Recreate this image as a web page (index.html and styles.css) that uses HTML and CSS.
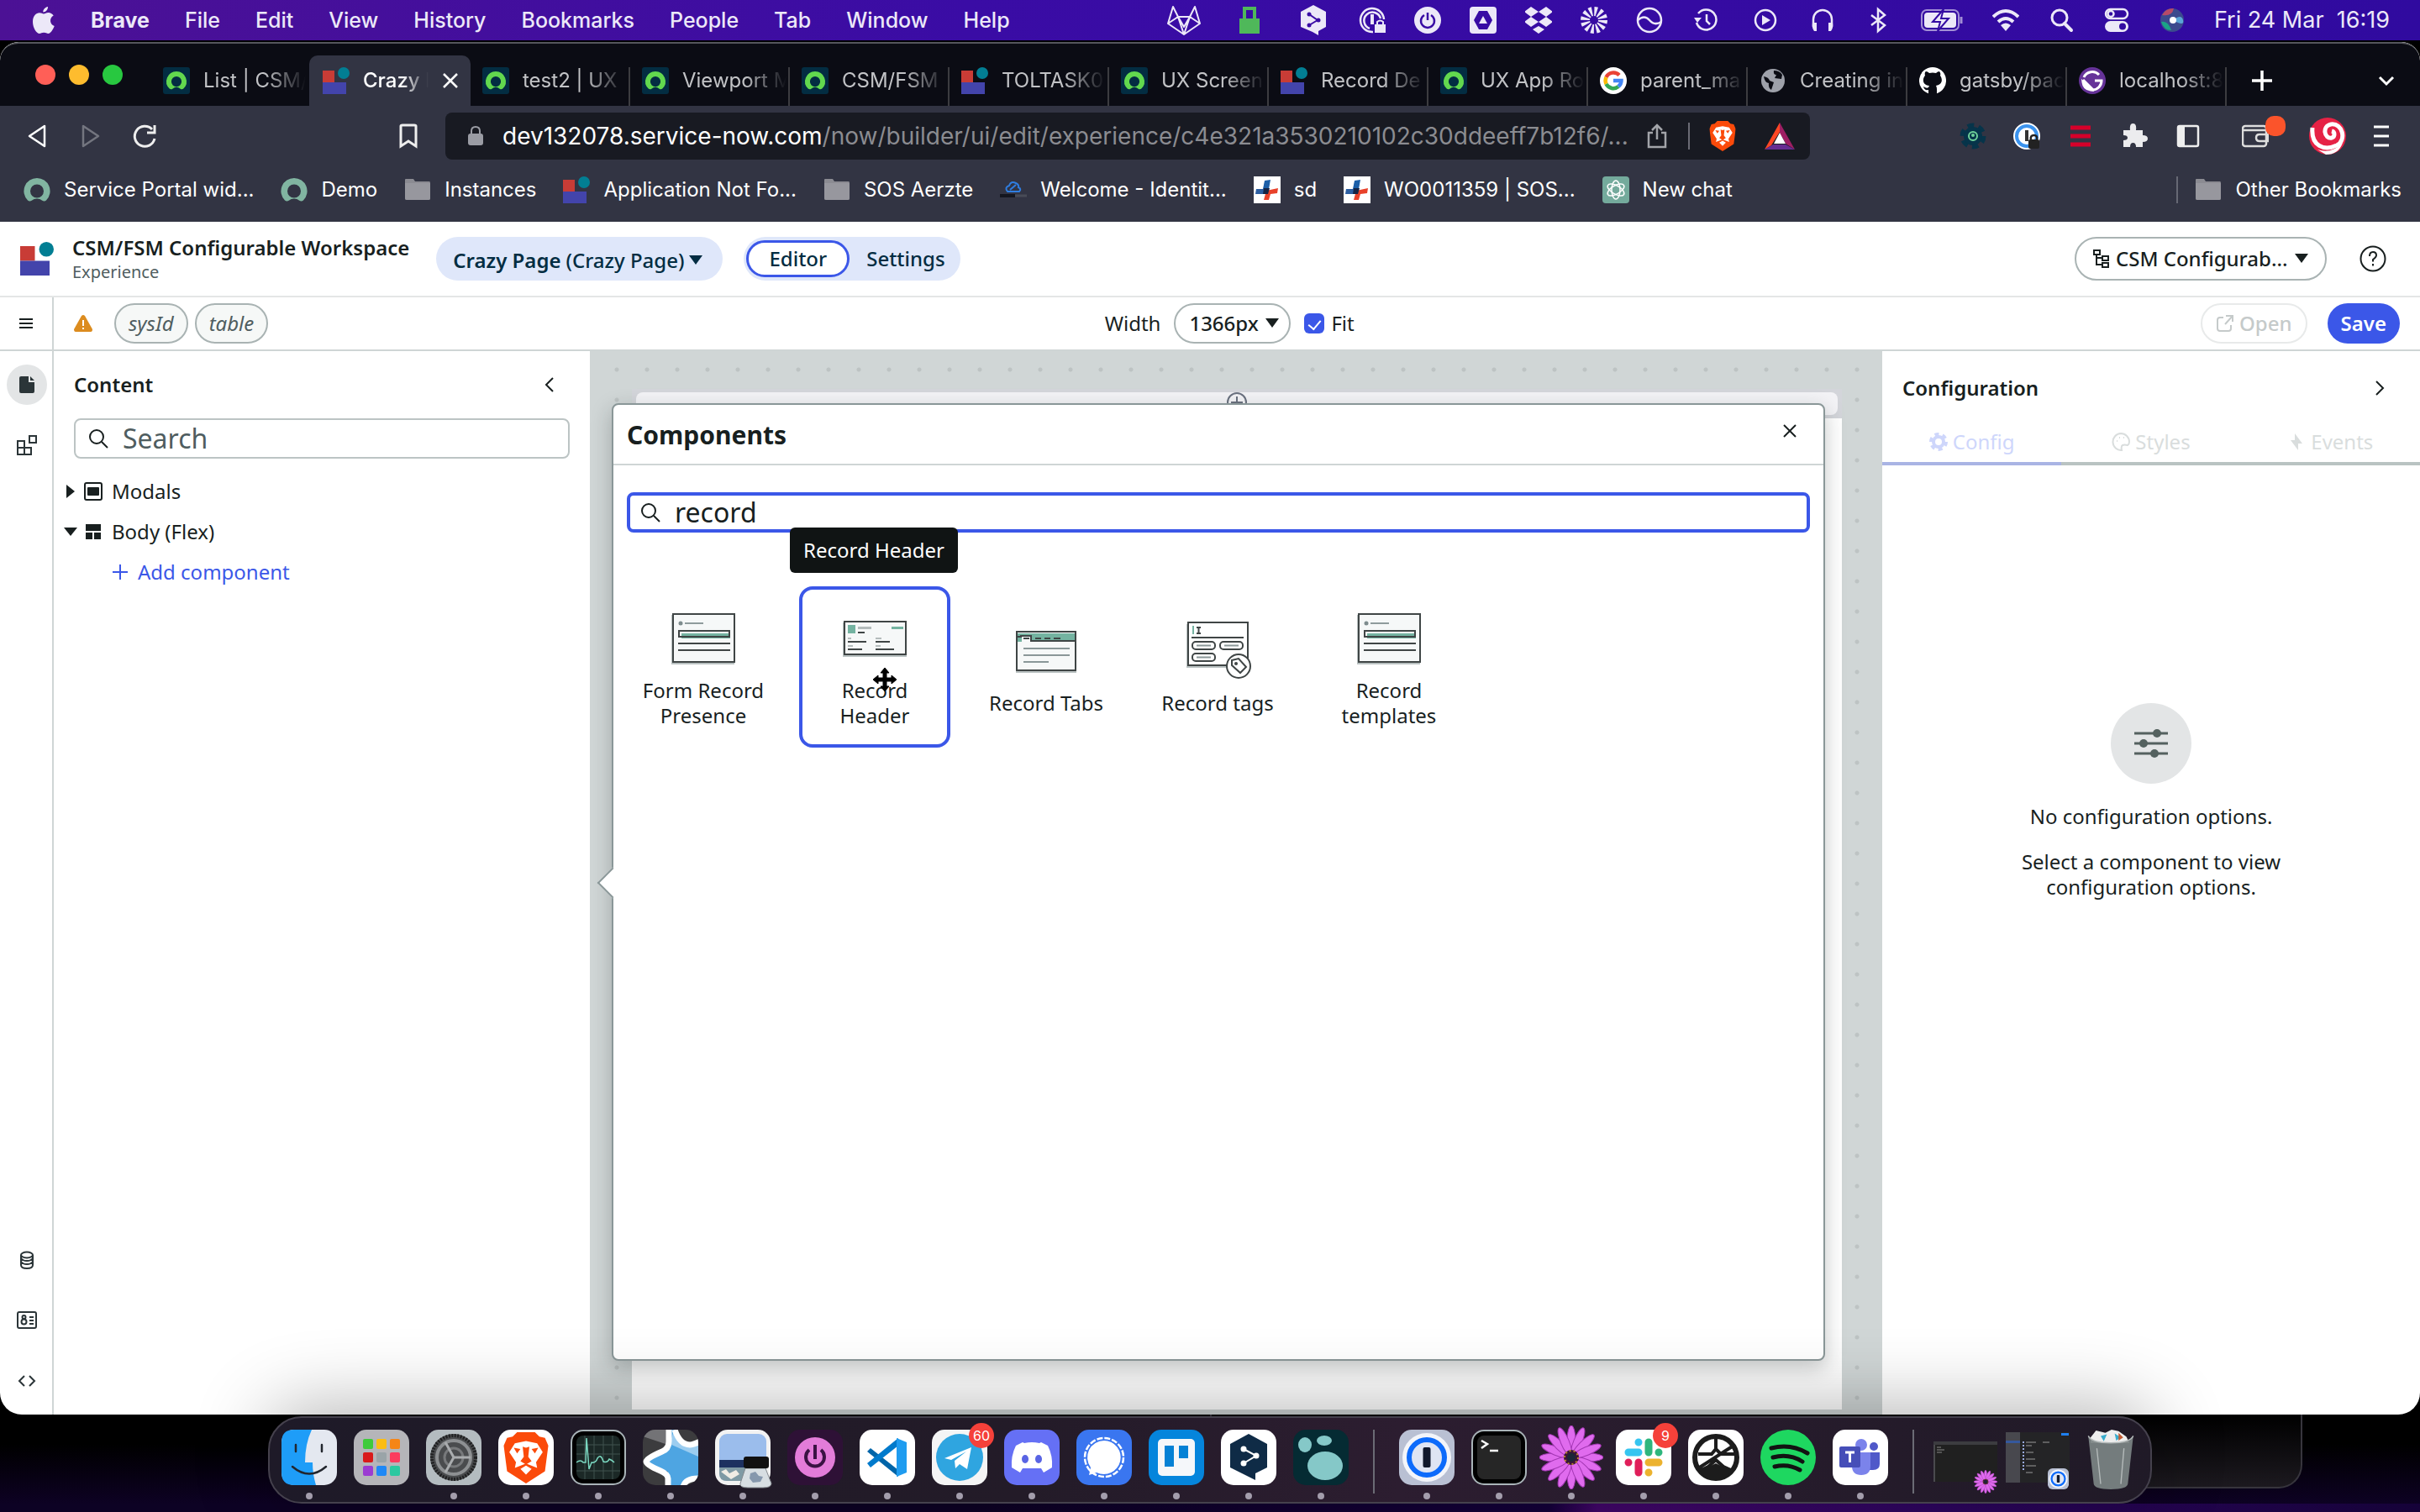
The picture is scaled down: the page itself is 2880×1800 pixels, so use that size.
FILE: index.html
```html
<!DOCTYPE html>
<html lang="en">
<head>
<meta charset="utf-8">
<title>CSM/FSM Configurable Workspace</title>
<link rel="stylesheet" href="styles.css">
</head>
<body>
<svg class="sprite" aria-hidden="true">
  <symbol id="now" viewBox="0 0 32 32"><rect width="32" height="32" rx="3" fill="#032d42"/><path d="M16 5a12 12 0 0 0-8.300 20.600c1 .9 2.500 1 3.600.1a7.600 7.600 0 0 1 9.400 0c1.100.9 2.600.8 3.600-.1A12 12 0 0 0 16 5Zm0 18.200a6.100 6.100 0 1 1 0-12.200 6.100 6.100 0 0 1 0 12.200Z" fill="#62d84e"/></symbol>
  <symbol id="now-soft" viewBox="0 0 32 32"><path d="M16 2A15.500 15.500 0 0 0 5 28.500c1.300 1.200 3.300 1.300 4.700.2a10 10 0 0 1 12.600 0c1.400 1.100 3.400 1 4.700-.2A15.500 15.500 0 0 0 16 2Zm0 23.500a8 8 0 1 1 0-16 8 8 0 0 1 0 16Z" fill="#81b5a1"/></symbol>
  <symbol id="blocks" viewBox="0 0 32 32"><path fill="#c83c36" d="M0 4h14v14H0z"/><circle cx="25" cy="7" r="7" fill="#027e93"/><path fill="#4344ab" d="M0 18h28v14H0z"/></symbol>
  <symbol id="folder" viewBox="0 0 32 32"><path d="M1 4q0-1 1-1h9l2 3h17q1 0 1 2v18q0 2-2 2H3q-2 0-2-2z" fill="#8b8b92"/><path d="M1 8h30v18q0 2-2 2H3q-2 0-2-2z" fill="#97979e"/></symbol>
  <symbol id="cross" viewBox="0 0 32 32"><path fill="#fff" d="M0 0h32v32H0z"/><path fill="#1c5fa8" d="m13 5 7-1-2 11h-7z"/><path fill="#e8412a" d="m15 17 14-3-1 6-8 1-2 7h-6z"/><path fill="#2d5fa2" d="M3 15h13l-2 6H2z"/><path fill="#152445" d="M12 14h7l-2 7h-6z"/></symbol>
  <symbol id="lens" viewBox="0 0 24 24"><circle cx="10" cy="10" r="8" fill="none" stroke="currentColor" stroke-width="2"/><path d="m16 16 7 7" stroke="currentColor" stroke-width="2" fill="none"/></symbol>
  <symbol id="caret" viewBox="0 0 16 12"><path d="M0 0h16L8 11z" fill="currentColor"/></symbol>
  <symbol id="lion" viewBox="0 0 40 46"><path fill="#fb4a0a" d="m12 0h16l4 4 5 1 3 7-3 23L20 46 3 35 0 12l3-7 5-1z"/><path fill="#fff" d="m20 8 10 2 5 8-6 9 1 5-10-4-10 4 1-5-6-9 5-8z"/><path fill="#fb4a0a" d="m17 13 3 1 3-1-1 9 3 4-5 3-5-3 3-4zM9 14l6 1-3 4zm22 0-6 1 3 4z"/><path fill="#fff" d="m20 30 5 3-5 5-5-5z"/></symbol>
  <symbol id="flower" viewBox="0 0 76 76"><g id="petals" fill="#e06bee" stroke="#a337b4" stroke-width="1"><ellipse cx="38" cy="18" rx="5" ry="18"/><ellipse cx="38" cy="58" rx="5" ry="18"/><ellipse cx="18" cy="38" rx="18" ry="5"/><ellipse cx="58" cy="38" rx="18" ry="5"/></g><use href="#petals" transform="rotate(22.500 38 38)"/><use href="#petals" transform="rotate(45 38 38)"/><use href="#petals" transform="rotate(67.500 38 38)"/><circle cx="38" cy="38" r="9" fill="#3a1638"/><circle cx="38" cy="38" r="8" fill="none" stroke="#c08a2a" stroke-width="2" stroke-dasharray="2 3"/><circle cx="38" cy="38" r="5" fill="#1c2638"/></symbol>
  <symbol id="onepw" viewBox="0 0 66 66"><rect width="66" height="66" rx="15" fill="#b9c0d3"/><circle cx="33" cy="33" r="29" fill="#f3f5fa"/><circle cx="33" cy="33" r="21" fill="#dfe5f3" stroke="#0d6bfb" stroke-width="6"/><rect x="28.500" y="21" width="9" height="24" rx="2" fill="#10182c"/></symbol>
  <symbol id="formcard" viewBox="0 0 80 80"><path d="M2 11h75v59H2z" fill="#b9c1c1"/><path d="M4 10h73v57H4z" fill="#f6f8f8" stroke="#3f4545" stroke-width="2"/><circle cx="13" cy="21" r="2.500" fill="#7e8c8e"/><path d="M18 21h22" stroke="#8f9b9c" stroke-width="2"/><path d="M14 33h58v6H14z" fill="#74b3a1"/><path d="M11 30h60v7H11z" fill="none" stroke="#3f4545" stroke-width="2"/><path d="M10 45h62M10 53h62" stroke="#3f4545" stroke-width="2"/></symbol>
</svg>

<header class="menubar">
  <nav class="menus" aria-label="Application menu">
    <svg class="apple" viewBox="0 0 26 32"><path fill="currentColor" d="M18 0c.3 3-2.500 6.500-5.700 6.500C12 3.500 15 .3 18 0Zm-5 8.500c1.500 0 3-1.500 5.700-1.500 2 0 4.500 1.200 6 3.500-5.500 3-4.500 10.500 1 12.500C24 27.500 21 32 18.500 32c-2 0-2.800-1.200-5.300-1.200S9.800 32 8 32C4.500 32 0 25 0 18 0 11 4 7.300 8 7.300c2.200 0 3.700 1.200 5 1.200Z"/></svg>
    <a href="#" class="strong">Brave</a><a href="#">File</a><a href="#">Edit</a><a href="#">View</a><a href="#">History</a><a href="#">Bookmarks</a><a href="#">People</a><a href="#">Tab</a><a href="#">Window</a><a href="#">Help</a>
  </nav>
  <div class="status">
    <svg class="w44" viewBox="-2 0 44 36"><path d="m1 22 6-20 6 12h14l6-12 6 20-19 13zM1 22l12-8 7 21 7-21 12 8M13 14l7 12 7-12" fill="none" stroke="currentColor" stroke-width="2" stroke-linejoin="round"/></svg>
    <svg class="w44" viewBox="0 0 44 36"><path d="M10 16h24v18H10z" fill="#4fb85a"/><path d="M16 16V4h12v12" fill="none" stroke="#4fb85a" stroke-width="4"/></svg>
    <svg class="w40" viewBox="0 0 40 36"><path d="m20 0 15 8v18l-9 5v5l-7-4L5 26V8z" fill="currentColor"/><path d="m15 11 10 7-10 6" fill="none" stroke="#3a0ca5" stroke-width="2"/><circle cx="15" cy="11" r="2.500" fill="#3a0ca5"/><circle cx="26" cy="18" r="2.500" fill="#3a0ca5"/><circle cx="15" cy="24" r="2.500" fill="#3a0ca5"/></svg>
    <svg viewBox="0 0 32 32"><path d="M17 30A14 14 0 1 1 30 15M13 26a10 10 0 1 1 13-12" fill="none" stroke="currentColor" stroke-width="2.500"/><path d="M14 9h4v12h-4zM19 21h13v10H19z" fill="currentColor"/><path d="M22 21v-3q3.500-3 7 0v3" fill="none" stroke="currentColor" stroke-width="2"/></svg>
    <svg viewBox="0 0 32 32"><circle cx="16" cy="16" r="16" fill="currentColor"/><path d="M12 10a8 8 0 1 0 8 0M16 7v9" fill="none" stroke="#380ba4" stroke-width="2.500"/></svg>
    <svg viewBox="0 0 32 32"><rect width="32" height="32" rx="4" fill="currentColor"/><path d="M11 5h10l6 11-6 11H11L5 16z" fill="#380ba4"/><path d="m16 11 5 9H11z" fill="currentColor"/></svg>
    <svg viewBox="0 0 32 32"><path fill="currentColor" d="m7 0 9 6-9 6-8-6zm18 0 8 6-8 6-9-6zM7 12l9 6-9 6-8-6zm18 0 8 6-8 6-9-6zm-9 11 7 4-7 5-7-5z"/></svg>
    <svg viewBox="0 0 32 32"><circle cx="16" cy="16" r="10.500" fill="none" stroke="currentColor" stroke-width="11" stroke-dasharray="3 2.500"/></svg>
    <svg viewBox="0 0 32 32"><circle cx="16" cy="16" r="14" fill="none" stroke="currentColor" stroke-width="2.500"/><path d="M2 16q8-7 14 0t14 2" fill="none" stroke="currentColor" stroke-width="2.500"/></svg>
    <svg class="w36" viewBox="0 0 36 32"><path d="M8 8a12 12 0 1 1-2 11M18 9v8l4 4" fill="none" stroke="currentColor" stroke-width="2.500"/><path d="M3 13h9l-5 6z" fill="currentColor"/></svg>
    <svg class="w36" viewBox="0 0 36 32"><circle cx="18" cy="16" r="12" fill="none" stroke="currentColor" stroke-width="2.500"/><path d="m14 10 10 6-10 6z" fill="currentColor"/></svg>
    <svg viewBox="0 0 32 32"><path d="M5 24V15a11 11 0 0 1 22 0v9" fill="none" stroke="currentColor" stroke-width="2.500"/><path d="M4 19h5v10H6q-3-4-2-10zm24 0h-5v10h3q3-4 2-10z" fill="currentColor"/></svg>
    <svg viewBox="0 0 32 32"><path d="m8 10 16 12-8 7V3l8 7L8 22" fill="none" stroke="currentColor" stroke-width="2.500"/></svg>
    <svg class="w52" viewBox="0 0 52 32"><rect x="2" y="4" width="44" height="24" rx="6" fill="none" stroke="currentColor" stroke-opacity=".6" stroke-width="2"/><rect x="5" y="7" width="38" height="18" rx="4" fill="currentColor"/><path d="m28 3-13 15h9l-3 11 13-15h-9z" fill="currentColor" stroke="#330aa2" stroke-width="2"/><path d="M49 12v8" stroke="currentColor" stroke-opacity=".6" stroke-width="3"/></svg>
    <svg viewBox="0 0 32 32"><path d="M1 12q15-14 30 0M7 18q9-8 18 0" fill="none" stroke="currentColor" stroke-width="4"/><path d="M10 22q6-5 12 0l-6 7z" fill="currentColor"/></svg>
    <svg viewBox="0 0 32 32"><circle cx="14" cy="13" r="9" fill="none" stroke="currentColor" stroke-width="3"/><path d="m20 20 8 8" stroke="currentColor" stroke-width="4" stroke-linecap="round"/></svg>
    <svg viewBox="0 0 32 32"><rect x="3" y="3" width="26" height="11" rx="5.500" fill="none" stroke="currentColor" stroke-width="2.500"/><circle cx="9" cy="8.500" r="3.500" fill="none" stroke="currentColor" stroke-width="2.500"/><rect x="2" y="17" width="28" height="13" rx="6.500" fill="currentColor"/><circle cx="23" cy="23.500" r="4" fill="#330aa2"/></svg>
    <svg viewBox="0 0 32 32"><circle cx="16" cy="16" r="14" fill="#3c4a8e"/><path d="M4 10a14 14 0 0 1 14-8q-2 10-14 8z" fill="#b84a68"/><path d="M3 18q8-2 12 10-9 0-12-10z" fill="#1ba486"/><path d="M17 16q10-8 12 0t-12 0z" fill="#5aa5d8"/><circle cx="17" cy="16" r="4" fill="#fff"/></svg>
    <time>Fri 24 Mar&nbsp; 16:19</time>
  </div>
</header>

<main class="browser">
  <div class="tabstrip">
    <div class="lights"><i class="red"></i><i class="yellow"></i><i class="green"></i></div>
    <div class="tabs">
      <a class="tab bare" href="#"><svg><use href="#now"/></svg><span>List | CSM/</span></a>
      <a class="tab active" href="#"><svg><use href="#blocks"/></svg><span>Crazy P</span><svg class="x" viewBox="0 0 20 20"><path d="m2 2 16 16M18 2 2 18" stroke="#fff" stroke-width="2.500"/></svg></a>
      <a class="tab" href="#"><svg><use href="#now"/></svg><span>test2 | UX</span></a>
      <a class="tab" href="#"><svg><use href="#now"/></svg><span>Viewport M</span></a>
      <a class="tab" href="#"><svg><use href="#now"/></svg><span>CSM/FSM</span></a>
      <a class="tab" href="#"><svg><use href="#blocks"/></svg><span>TOLTASK0</span></a>
      <a class="tab" href="#"><svg><use href="#now"/></svg><span>UX Screen</span></a>
      <a class="tab" href="#"><svg><use href="#blocks"/></svg><span>Record De</span></a>
      <a class="tab" href="#"><svg><use href="#now"/></svg><span>UX App Ro</span></a>
      <a class="tab" href="#"><svg viewBox="0 0 32 32"><circle cx="16" cy="16" r="16" fill="#fff"/><g fill="none" stroke-width="4.500"><path stroke="#ea4335" d="M23 9.500A9.500 9.500 0 0 0 7.500 12"/><path stroke="#fbbc05" d="M7.500 12a9.500 9.500 0 0 0 0 8"/><path stroke="#34a853" d="M7.500 20A9.500 9.500 0 0 0 22 23"/><path stroke="#4285f4" d="M22 23q3.500-3 3.500-7H16"/></g></svg><span>parent_ma</span></a>
      <a class="tab" href="#"><svg viewBox="0 0 32 32"><circle cx="16" cy="16" r="14" fill="#9ea1aa"/><path d="M5 11q6 1 7 5l5 2-3 9q-4-3-3-8-5-1-6-8zM17 4q-1 5 3 5l-2 4 8 1 1-5q-3-5-10-5z" fill="#0b0c14"/></svg><span>Creating in</span></a>
      <a class="tab" href="#"><svg viewBox="0 0 32 32"><path fill="#fff" d="M16 0a16 16 0 0 0-5 31.200V27q-5 1-6-4 6 4 7-1c-9-1-8-9-5-12q-1-4 1-5 2 0 4 2 4-1 8 0 2-2 4-2 2 2 1 5c3 4 3 11-5 12q1 2 1 4v5.200A16 16 0 0 0 16 0Z"/></svg><span>gatsby/pac</span></a>
      <a class="tab" href="#"><svg viewBox="0 0 32 32"><circle cx="16" cy="16" r="16" fill="#663399"/><path d="M5 15 17 27A11 11 0 0 0 27 16h-8M5 18l9 9Q6 26 5 18zM6 12A11 11 0 0 1 24 9" fill="none" stroke="#fff" stroke-width="3"/></svg><span>localhost:8</span></a>
    </div>
    <button class="bare-btn" aria-label="New tab"><svg viewBox="0 0 24 24"><path d="M12 0v24M0 12h24" stroke="#fff" stroke-width="3.500"/></svg></button>
    <button class="bare-btn list" aria-label="List tabs"><svg viewBox="0 0 24 24"><path d="m4 8 8 8 8-8" fill="none" stroke="#fff" stroke-width="3"/></svg></button>
  </div>

  <div class="toolbar">
    <div class="nav">
      <button class="bare-btn" aria-label="Back"><svg viewBox="0 0 32 32"><path d="M25 4v24L7 16z" fill="none" stroke="#fff" stroke-width="2.500" stroke-linejoin="round"/></svg></button>
      <button class="bare-btn" aria-label="Forward"><svg viewBox="0 0 32 32"><path d="M7 4v24l18-12z" fill="none" stroke="#73757f" stroke-width="2.500" stroke-linejoin="round"/></svg></button>
      <button class="bare-btn" aria-label="Reload"><svg viewBox="0 0 32 32"><path d="M28 19A12 12 0 1 1 25 8" fill="none" stroke="#eee" stroke-width="3"/><path d="M28 3v9h-9" fill="none" stroke="#eee" stroke-width="3"/></svg></button>
      <button class="bare-btn mark" aria-label="Bookmark this page"><svg viewBox="0 0 32 32"><path d="M7 4q0-1 2-1h14q2 0 2 1v24l-9-6-9 6z" fill="none" stroke="#eee" stroke-width="3"/></svg></button>
    </div>
    <div class="urlbar">
      <svg class="lock" viewBox="0 0 18 24"><rect y="9" width="18" height="14" rx="3" fill="#9a9ca4"/><path d="M4 10V6q0-5 5-5t5 5v4" fill="none" stroke="#9a9ca4" stroke-width="2"/></svg>
      <a class="url" href="#"><b>dev132078.service-now.com</b>/now/builder/ui/edit/experience/c4e321a3530210102c30ddeeff7b12f6/...</a>
      <svg viewBox="0 0 32 32"><path d="M11 12H6v17h20V12h-5M16 20V3m-6 6 6-6 6 6" fill="none" stroke="#a2a4a9" stroke-width="2.500"/></svg>
      <i class="rule"></i>
      <svg class="w36" viewBox="0 0 40 46"><use href="#lion"/></svg>
      <svg class="w36" viewBox="0 0 36 32"><path d="m18 0 9 21-9-6z" fill="#a3155d"/><path d="M18 0v11L8 27l-8 5z" fill="#ff4724"/><path d="m18 0 18 32-11-7-7-14z" fill="#9e1f63"/><path d="m0 32 10-6h15l11 6z" fill="#662d91"/><path d="m18 12 7 13H11z" fill="#fff"/></svg>
    </div>
    <div class="extensions">
      <svg viewBox="0 0 32 32"><circle cx="16" cy="16" r="11.500" fill="none" stroke="#06344a" stroke-width="8" stroke-dasharray="7 5"/><circle cx="16" cy="16" r="11" fill="#06344a"/><circle cx="16" cy="16" r="5" fill="none" stroke="#6fd29a" stroke-width="2"/><circle cx="16" cy="15" r="2" fill="#6fd29a"/></svg>
      <svg viewBox="0 0 32 32"><circle cx="16" cy="16" r="16" fill="#fff"/><circle cx="16" cy="16" r="12" fill="#fff" stroke="#3b93ee" stroke-width="4"/><path d="M14 9h4v13h-4z" fill="#333"/><rect x="18" y="20" width="13" height="11" rx="2" fill="#222"/><path d="M21 20q-1-5 3.500-5t3.500 5" fill="none" stroke="#222" stroke-width="2.500"/></svg>
      <svg viewBox="0 0 32 32"><path d="M4 6h24M4 16h24M4 26h24" stroke="#d6002a" stroke-width="5"/></svg>
      <svg viewBox="0 0 32 32"><path fill="#ececee" d="M3 9h8q-1-8 3.500-8T18 9h8v6q6 0 6 4t-6 4v6h-8q0-5-3.500-5T11 29H3v-8q5 0 5-3t-5-3z"/></svg>
      <svg viewBox="0 0 32 32"><rect x="4" y="4" width="24" height="24" rx="2" fill="none" stroke="#eee" stroke-width="2.500"/><path d="M4 4h8v24H4z" fill="#eee"/></svg>
      <span class="wallet"><svg viewBox="0 0 32 32"><rect x="1" y="4" width="28" height="24" rx="3" fill="none" stroke="#ddd" stroke-width="2.500"/><path d="M1 9h28M31 14H21q-4 0-4 4t4 4h10z" fill="none" stroke="#ddd" stroke-width="2.500"/></svg><i></i></span>
      <svg class="avatar" viewBox="0 0 44 44"><circle cx="22" cy="22" r="22" fill="#e62245"/><path d="M4 12C2 34 18 40 33 33 45 27 40 6 26 8c-11 2-8 18 1 16 4-1 4-7 0-8" fill="none" stroke="#fff" stroke-width="5"/><path d="M10 38q16 6 30-8-5 14-20 14z" fill="#fff"/></svg>
      <svg class="menu" viewBox="0 0 32 32"><path d="M7 5h18M7 16h18M7 27h18" stroke="#fff" stroke-width="3"/></svg>
    </div>
  </div>

  <nav class="bookmarks" aria-label="Bookmarks">
    <a href="#"><svg><use href="#now-soft"/></svg>Service Portal wid...</a>
    <a href="#"><svg><use href="#now-soft"/></svg>Demo</a>
    <a href="#"><svg><use href="#folder"/></svg>Instances</a>
    <a href="#"><svg><use href="#blocks"/></svg>Application Not Fo...</a>
    <a href="#"><svg><use href="#folder"/></svg>SOS Aerzte</a>
    <a href="#"><svg viewBox="0 0 32 32"><path d="M9 18q-4-5 2-7 2-6 8-3 4 2 3 5 4 2 1 5zM12 16l7-6" fill="none" stroke="#2f7de0" stroke-width="2"/><path d="M0 23h18" stroke="#14161f" stroke-width="4"/><path d="M18 23h14" stroke="#484b57" stroke-width="3"/></svg>Welcome - Identit...</a>
    <a href="#"><svg><use href="#cross"/></svg>sd</a>
    <a href="#"><svg><use href="#cross"/></svg>WO0011359 | SOS...</a>
    <a href="#"><svg viewBox="0 0 32 32"><rect width="32" height="32" rx="4" fill="#74aa9c"/><g fill="none" stroke="#fff" stroke-width="1.500"><ellipse cx="16" cy="16" rx="5" ry="11"/><ellipse cx="16" cy="16" rx="5" ry="11" transform="rotate(60 16 16)"/><ellipse cx="16" cy="16" rx="5" ry="11" transform="rotate(120 16 16)"/></g></svg>New chat</a>
    <a href="#" class="other"><svg><use href="#folder"/></svg>Other Bookmarks</a>
  </nav>

  <header class="apphead">
    <svg class="logo"><use href="#blocks"/></svg>
    <div class="apptitle"><h1>CSM/FSM Configurable Workspace</h1><p>Experience</p></div>
    <button class="pagepick" aria-haspopup="listbox"><b>Crazy Page</b> (Crazy Page)<svg class="caret"><use href="#caret"/></svg></button>
    <div class="switch"><button class="on">Editor</button><button>Settings</button></div>
    <div class="pill scope">
      <svg viewBox="0 0 20 24"><path d="M2 2h7v5H2zM12 9h7v5h-7zM12 17h7v5h-7zM5 7v12h7M5 11h7" fill="none" stroke="currentColor" stroke-width="2"/></svg>
      <select aria-label="Scope"><option>CSM Configurab...</option></select>
      <svg class="caret"><use href="#caret"/></svg>
    </div>
    <button class="bare-btn help" aria-label="Help"><svg viewBox="0 0 32 32"><circle cx="16" cy="16" r="14.500" fill="none" stroke="#181f1f" stroke-width="2"/><path d="M12 13q0-5 4-5t4 4q0 2-4 5v2.500M16 22v2.500" fill="none" stroke="#181f1f" stroke-width="2"/></svg></button>
  </header>

  <div class="appbar">
    <div class="burger"><button class="bare-btn" aria-label="Menu"><svg viewBox="0 0 18 12"><path d="M1 1h16M1 6h16M1 11h16" stroke="#181f1f" stroke-width="2"/></svg></button></div>
    <svg class="warn" viewBox="0 0 22 20"><path d="M9 1q2-2 4 0l9 16q0 3-2 3H2q-2 0-2-3z" fill="#dc8c1f"/><path d="M11 6v7m0 2v2" stroke="#fff" stroke-width="2"/></svg>
    <div class="chips"><button class="chip">sysId</button><button class="chip">table</button></div>
    <div class="width">
      <label for="w">Width</label>
      <div class="pill small"><select id="w"><option>1366px</option></select><svg class="caret"><use href="#caret"/></svg></div>
      <label class="fit"><input type="checkbox" checked> Fit</label>
    </div>
    <div class="acts">
      <button class="pill small open" disabled><svg viewBox="0 0 22 22"><path d="M9 4H5Q2 4 2 7v10q0 3 3 3h10q3 0 3-3v-4M12 2h8v7M20 2l-9 10" fill="none" stroke="currentColor" stroke-width="2"/></svg>Open</button>
      <button class="save">Save</button>
    </div>
  </div>

  <div class="workspace">
    <nav class="rail" aria-label="Panels">
      <button class="on" aria-label="Content"><svg viewBox="0 0 22 22"><path d="M2 3q0-2 2-2h9v7h7v11q0 2-2 2H4q-2 0-2-2zM15 1l5 5h-5z" fill="#2b3538"/></svg></button>
      <button aria-label="Components"><svg class="big" viewBox="0 0 24 24"><path d="M1 7h8v8H1zM1 15h8v8H1zM9 15h8v8H9zM15 1h8v8h-8z" fill="none" stroke="#2b3538" stroke-width="2"/></svg></button>
      <span class="push"></span>
      <button aria-label="Data"><svg viewBox="0 0 22 22"><ellipse cx="11" cy="5" rx="7" ry="3.500" fill="none" stroke="#2b3538" stroke-width="2"/><path d="M4 5v12q0 4 7 4t7-4V5M4 9q2 3 7 3t7-3M4 13q2 3 7 3t7-3" fill="none" stroke="#2b3538" stroke-width="2"/></svg></button>
      <button aria-label="Client state"><svg class="big" viewBox="0 0 24 24"><rect x="1" y="2" width="22" height="19" rx="2" fill="none" stroke="#2b3538" stroke-width="2"/><circle cx="8.500" cy="8" r="2" fill="none" stroke="#2b3538" stroke-width="2"/><circle cx="8.500" cy="13.500" r="3" fill="none" stroke="#2b3538" stroke-width="2"/><path d="M15 8h5M15 12h5M15 16h5" stroke="#2b3538" stroke-width="2"/></svg></button>
      <button aria-label="Scripts"><svg viewBox="0 0 22 22"><path d="M8 5 2 11l6 6M14 5l6 6-6 6" fill="none" stroke="#2b3538" stroke-width="2"/></svg></button>
    </nav>

    <aside class="content">
      <div class="panelhead"><h2>Content</h2><svg viewBox="0 0 16 20"><path d="m12 2-8 8 8 8" fill="none" stroke="#181f1f" stroke-width="2"/></svg></div>
      <label class="search"><svg><use href="#lens"/></svg><input type="text" placeholder="Search" aria-label="Search content"></label>
      <ul class="tree">
        <li><svg class="arrow" viewBox="0 0 20 16"><path d="m5 0 10 8-10 8z" fill="#181f1f"/></svg><svg viewBox="0 0 22 22"><rect x="1" y="1" width="20" height="20" rx="2" fill="none" stroke="#181f1f" stroke-width="2"/><rect x="4" y="6" width="14" height="10" rx="1" fill="#181f1f"/></svg>Modals</li>
        <li><svg class="arrow" viewBox="0 0 20 16"><path d="M2 3h16l-8 10z" fill="#181f1f"/></svg><svg viewBox="0 0 22 22"><path d="M2 2h18v8H2zM2 12h8v8H2zM12 12h8v8h-8z" fill="#181f1f"/></svg>Body (Flex)</li>
      </ul>
      <button class="bare-btn add"><svg viewBox="0 0 18 18"><path d="M9 0v18M0 9h18" stroke="currentColor" stroke-width="2"/></svg>Add component</button>
    </aside>

    <section class="canvas">
      <div class="stage"><div class="slot"><svg viewBox="0 0 24 24"><circle cx="12" cy="12" r="11" fill="none" stroke="#6b7280" stroke-width="2"/><path d="M12 5v14M5 12h14" stroke="#6b7280" stroke-width="2"/></svg></div></div>
      <div class="dialog" role="dialog" aria-label="Components">
        <div class="dialoghead"><h2>Components</h2><button class="bare-btn" aria-label="Close"><svg viewBox="0 0 16 16"><path d="m1 1 14 14M15 1 1 15" stroke="#181f1f" stroke-width="2"/></svg></button></div>
        <label class="search focus"><svg><use href="#lens"/></svg><input type="text" value="record" aria-label="Search components"></label>
        <div class="cards">
          <button class="card"><svg><use href="#formcard"/></svg>Form Record Presence</button>
          <button class="card on"><svg viewBox="0 0 80 80"><path d="M2 20h76v41H2z" fill="#b9c1c1"/><path d="M4 19h73v39H4z" fill="#f6f8f8" stroke="#3f4545" stroke-width="2"/><path d="M8 23h9v10H8zM60 25h14v3H60z" fill="#74b3a1"/><path d="M20 25h16v3H20z" fill="#b4bcbc"/><path d="M20 32h8M8 43h22M41 43h17M8 52h17M41 52h22" stroke="#3f4545" stroke-width="2"/><path d="M8 39h4M41 39h7M8 48h6M41 48h6" stroke="#b4bcbc" stroke-width="2"/></svg>Record Header
            <span class="tooltip" role="tooltip">Record Header</span>
            <svg class="cursor" viewBox="0 0 28 28"><path d="m14 0 5 6h-3v6h6V9l6 5-6 5v-3h-6v6h3l-5 6-5-6h3v-6H6v3l-6-5 6-5v3h6V6H9z" fill="#000" stroke="#000" stroke-width="1"/></svg></button>
          <button class="card"><svg viewBox="0 0 80 80"><path d="M4 18h72v47H4z" fill="#b9c1c1"/><path d="M5 16h70v47H5z" fill="#f6f8f8"/><path d="M5 18h70v10H5z" fill="#74b3a1"/><path d="M5 28V22h5v-1h12v6h53" fill="none" stroke="#3f4545" stroke-width="2"/><path d="M11 22h10v7H11z" fill="#f6f8f8"/><path d="M5 16h70v46H5z" fill="none" stroke="#3f4545" stroke-width="2"/><path d="M13 24h7M27 24h7M38 24h7M49 24h8" stroke="#3f4545" stroke-width="2"/><path d="M13 36h55M13 44h55M13 52h30" stroke="#8a9798" stroke-width="2"/></svg>Record Tabs</button>
          <button class="card"><svg viewBox="0 0 80 80"><path d="M3 7h72v52H3z" fill="#b9c1c1"/><path d="M5 5h71v51H5z" fill="#fff" stroke="#3f4545" stroke-width="2"/><path d="M11 9v10" stroke="#74b3a1" stroke-width="2"/><path d="M15 11h5M15 18h5M17.500 11v7M9 23h62" stroke="#3f4545" stroke-width="2"/><g fill="#fff" stroke="#3f4545" stroke-width="2"><rect x="10" y="28" width="27" height="9" rx="4"/><rect x="43" y="28" width="27" height="9" rx="4"/><rect x="10" y="42" width="27" height="9" rx="4"/></g><path d="M15 32.500h17M48 32.500h17M15 46.500h17" stroke="#8a9798" stroke-width="2"/><circle cx="65" cy="57" r="14" fill="#fff" stroke="#3f4545" stroke-width="2"/><path d="m57 50 8-2 9 10-7 7-10-9z" fill="none" stroke="#3f4545" stroke-width="2"/><circle cx="62" cy="54" r="2" fill="#3f4545"/></svg>Record tags</button>
          <button class="card"><svg><use href="#formcard"/></svg>Record templates</button>
        </div>
      </div>
    </section>

    <aside class="config">
      <div class="panelhead"><h2>Configuration</h2><svg viewBox="0 0 16 20"><path d="m4 2 8 8-8 8" fill="none" stroke="#181f1f" stroke-width="2"/></svg></div>
      <div class="cfgtabs">
        <button class="on" disabled><svg viewBox="0 0 22 22"><circle cx="11" cy="11" r="6" fill="none" stroke="currentColor" stroke-width="4"/><circle cx="11" cy="11" r="9" fill="none" stroke="currentColor" stroke-width="4" stroke-dasharray="5 4.400"/></svg>Config</button>
        <button disabled><svg viewBox="0 0 22 22"><path d="M11 1a10 10 0 1 0 1 20q-1-5 1-6t6 0q2-1 2-4A10 10 0 0 0 11 1z" fill="none" stroke="currentColor" stroke-width="2"/><path d="M6 10h1M9 6h1M14 6h1" stroke="currentColor" stroke-width="2"/></svg>Styles</button>
        <button disabled><svg viewBox="0 0 18 22"><path d="M7 1v8H2l9 12v-8h5z" fill="currentColor"/></svg>Events</button>
      </div>
      <div class="empty">
        <span class="disc"><svg viewBox="0 0 40 40"><path d="M0 8h40M0 20h40M0 32h40" stroke="#54615f" stroke-width="3"/><circle cx="27" cy="8" r="5" fill="#54615f"/><circle cx="11" cy="20" r="5" fill="#54615f"/><circle cx="24" cy="32" r="5" fill="#54615f"/></svg></span>
        <p>No configuration options.</p>
        <p>Select a component to view<br>configuration options.</p>
      </div>
    </aside>
  </div>
</main>

<footer class="desk">
  <div class="dockback"></div>
  <div class="dock">
    <a class="run" href="#" aria-label="Finder"><svg viewBox="0 0 66 66"><rect width="66" height="66" rx="15" fill="#e4e8f0"/><path d="M15 0h21q-8 17-8 39h9q0 14 4 27H15Q0 66 0 51V15Q0 0 15 0z" fill="#1e9df8"/><path d="M17 18v8M48 18v8M13 44q20 17 40 0" stroke="#22262e" stroke-width="2.500" fill="none" stroke-linecap="round"/></svg></a>
    <a href="#" aria-label="Launchpad"><svg viewBox="0 0 66 66"><rect width="66" height="66" rx="15" fill="#b5b5b9"/><g><rect x="11" y="11" width="12" height="12" rx="2" fill="#3ecb3b"/><rect x="27" y="11" width="12" height="12" rx="2" fill="#fcbd12"/><rect x="43" y="11" width="12" height="12" rx="2" fill="#f58516"/><rect x="11" y="27" width="12" height="12" rx="2" fill="#d91a1a"/><rect x="27" y="27" width="12" height="12" rx="2" fill="#9aa4a8"/><rect x="43" y="27" width="12" height="12" rx="2" fill="#fb3c5e"/><rect x="11" y="43" width="12" height="12" rx="2" fill="#9b3bd2"/><rect x="27" y="43" width="12" height="12" rx="2" fill="#1f88f6"/><rect x="43" y="43" width="12" height="12" rx="2" fill="#2cc8a0"/></g></svg></a>
    <a class="run" href="#" aria-label="System Preferences"><svg viewBox="0 0 66 66"><rect width="66" height="66" rx="15" fill="#b4bcc0"/><circle cx="33" cy="33" r="28" fill="#4a4c4e"/><circle cx="33" cy="33" r="26" fill="none" stroke="#1f2021" stroke-width="4" stroke-dasharray="2 1.500"/><circle cx="33" cy="33" r="20" fill="none" stroke="#8d9092" stroke-width="4"/><circle cx="33" cy="33" r="11" fill="none" stroke="#77797b" stroke-width="3"/><path d="M33 33h20M33 33 23 15M33 33 23 51" stroke="#a9acae" stroke-width="3"/></svg></a>
    <a class="run" href="#" aria-label="Brave"><svg viewBox="0 0 66 66"><rect width="66" height="66" rx="15" fill="#fff"/><use href="#lion" x="5" y="3" width="56" height="61"/></svg></a>
    <a class="run" href="#" aria-label="Activity Monitor"><svg viewBox="0 0 66 66"><rect width="66" height="66" rx="15" fill="#a9b4b8"/><rect x="2" y="2" width="62" height="62" rx="13" fill="#000"/><rect x="7" y="7" width="52" height="52" rx="8" fill="#1b2826"/><path d="M17 7v52M28 7v52M39 7v52M50 7v52M7 18h52M7 29h52M7 49h52" stroke="#40524e"/><path d="M7 39q5-4 8 0h3l1-29 3 37 3-8q5 1 7-5 4-6 7 4 5 2 7-3 3 1 6 4" fill="none" stroke="#7ad8c0" stroke-width="1.500"/></svg></a>
    <a class="run" href="#" aria-label="Star"><svg viewBox="0 0 66 66"><defs><clipPath id="tile"><rect width="66" height="66" rx="15"/></clipPath></defs><g clip-path="url(#tile)"><path d="M0 0h66v66H0z" fill="#3c3c3e"/><path d="M0 0h30v18L0 8z" fill="#737376"/><path d="M34 0h4q6 18 18 18l10-2v42q-14-2-18 8H30V50Q4 42 4 38t24-14q6-2 6-24z" fill="#4ea5e2"/><path d="M36 4q6 14 20 14l10-2v16L32 17z" fill="#9ccdf0"/><path d="M38 0q6 18 18 18 4 0 12-4M31 0v14q0 9-8 12Q4 34 4 38t17 11q9 4 9 9v10M48 68q3-11 20-10" fill="none" stroke="#fff" stroke-width="7"/></g></svg></a>
    <a class="run" href="#" aria-label="Preview"><svg class="spill" viewBox="0 0 66 66"><rect width="66" height="66" rx="15" fill="#f2f2f2"/><rect x="5" y="5" width="56" height="56" rx="9" fill="#9bbdec"/><path d="M5 36h56v10H5z" fill="#1d3160"/><path d="M5 45h56v7q0 9-9 9H14q-9 0-9-9z" fill="#7f9aa4"/><path d="m7 50 6-3 4 5 8-4 4 5-10 6z" fill="#f0ece4"/><path d="M36 46h24l7 18q0 5-10 5H39q-10 0-9-5z" fill="#d7dee2" stroke="#84898e"/><path d="m42 52 6-2 4 5 5 1-3 6-9 1-4-5z" fill="#8698ad"/><rect x="34" y="32" width="30" height="14" rx="3" fill="#111"/></svg></a>
    <a class="run" href="#" aria-label="Power timer"><svg viewBox="0 0 66 66"><rect width="66" height="66" rx="15" fill="#2e1136"/><circle cx="33" cy="33" r="24" fill="#e37cd9"/><path d="M26 24a11 11 0 1 0 14 0M33 18v17" fill="none" stroke="#3a1243" stroke-width="4"/></svg></a>
    <a class="run" href="#" aria-label="Code"><svg viewBox="0 0 66 66"><rect width="66" height="66" rx="15" fill="#fff"/><path d="m9 26 4-4 33 26v8L9 26z" fill="#0065a9"/><path d="m9 40 4 5 33-26v-9z" fill="#007acc"/><path d="m44 10 12 5v36l-12 5z" fill="#1f9cf0"/></svg></a>
    <a class="run" href="#" aria-label="Telegram"><svg viewBox="0 0 66 66"><rect width="66" height="66" rx="15" fill="#f5f5f5"/><circle cx="33" cy="33" r="28" fill="#2fa5e0"/><path d="m15 34 32-13-5 26-9-6-5 5-1-9 14-11-18 10z" fill="#fff"/></svg><em>60</em></a>
    <a class="run" href="#" aria-label="Discord"><svg viewBox="0 0 66 66"><rect width="66" height="66" rx="15" fill="#6570f5"/><path d="M24 16q9-2 18 0l2-1 8 4q6 12 5 26l-10 6-3-5H22l-3 5-10-6q-1-14 5-26l8-4z" fill="#fff"/><ellipse cx="25" cy="35" rx="4" ry="5" fill="#5964e4"/><ellipse cx="41" cy="35" rx="4" ry="5" fill="#5964e4"/></svg></a>
    <a class="run" href="#" aria-label="Signal"><svg viewBox="0 0 66 66"><rect width="66" height="66" rx="15" fill="#3a76f0"/><circle cx="33" cy="33" r="23" fill="none" stroke="#fff" stroke-width="2.500" stroke-dasharray="7 2"/><path d="M33 13a20 20 0 1 1-9 38l-9 3 2-9A20 20 0 0 1 33 13z" fill="#fff"/></svg></a>
    <a class="run" href="#" aria-label="Trello"><svg viewBox="0 0 66 66"><rect width="66" height="66" rx="15" fill="#0585dc"/><rect x="11" y="11" width="44" height="44" rx="5" fill="#f5f7fa"/><path d="M19 19h11v25H19zM36 19h11v15H36z" fill="#0581d5"/></svg></a>
    <a class="run" href="#" aria-label="DeepL"><svg viewBox="0 0 66 66"><rect width="66" height="66" rx="15" fill="#fff"/><path d="m33 5 22 12v28L41 52v8L11 45V17z" fill="#0f2b46"/><path d="m27 23 15 8-15 9" fill="none" stroke="#fff" stroke-width="2"/><circle cx="27" cy="23" r="3.500" fill="#fff"/><circle cx="42" cy="31" r="3.500" fill="#fff"/><circle cx="27" cy="40" r="3.500" fill="#fff"/></svg></a>
    <a class="run" href="#" aria-label="Logseq"><svg viewBox="0 0 66 66"><rect width="66" height="66" rx="15" fill="#052b33"/><ellipse cx="14" cy="18" rx="8" ry="9" fill="#85c8c8"/><ellipse cx="37" cy="13" rx="9" ry="6" fill="#85c8c8"/><ellipse cx="38" cy="43" rx="21" ry="17" fill="#85c8c8"/></svg></a>
    <i class="rule"></i>
    <a class="run" href="#" aria-label="1Password"><svg><use href="#onepw"/></svg></a>
    <a class="run" href="#" aria-label="Terminal"><svg viewBox="0 0 66 66"><rect width="66" height="66" rx="15" fill="#a9b4b8"/><rect x="2" y="2" width="62" height="62" rx="13" fill="#000"/><rect x="7" y="7" width="52" height="52" rx="8" fill="#262626"/><path d="m12 13 7 4-7 5M22 25h10" fill="none" stroke="#fff" stroke-width="2.500"/></svg></a>
    <a class="run" href="#" aria-label="Flower"><svg class="over"><use href="#flower"/></svg></a>
    <a class="run" href="#" aria-label="Slack"><svg viewBox="0 0 66 66"><rect width="66" height="66" rx="15" fill="#fff"/><g stroke-width="9" stroke-linecap="round"><path d="M15 27h12M27 15v0" stroke="#36c5f0"/><path d="M39 15v12M51 27v0" stroke="#2eb67d"/><path d="M51 39H39M39 51v0" stroke="#ecb22e"/><path d="M27 51V39M15 39v0" stroke="#e01e5a"/></g></svg><em>9</em></a>
    <a class="run" href="#" aria-label="Wheel"><svg viewBox="0 0 66 66"><rect width="66" height="66" rx="15" fill="#fff"/><circle cx="33" cy="33" r="25" fill="#fff" stroke="#1c1c1c" stroke-width="6"/><path d="M33 8v17M12 46l42-27M12 29h16l5-6 6 6h16M14 49l10-5 9-8 9 8 11 5" fill="none" stroke="#1c1c1c" stroke-width="4"/><path d="m33 40 12 6 8 1-6 8-8 3H27l-8-3-6-8 8-1z" fill="#1c1c1c"/></svg></a>
    <a class="run" href="#" aria-label="Spotify"><svg viewBox="0 0 66 66"><circle cx="33" cy="33" r="33" fill="#1ed760"/><path d="M13 22q23-6 43 6M15 33q19-5 35 5M17 44q16-4 30 4" fill="none" stroke="#121212" stroke-width="5" stroke-linecap="round"/></svg></a>
    <a class="run" href="#" aria-label="Teams"><svg viewBox="0 0 66 66"><rect width="66" height="66" rx="15" fill="#fff"/><circle cx="34" cy="18" r="7" fill="#7b83eb"/><circle cx="49" cy="20" r="5" fill="#5059c9"/><path d="M42 27h14v14q0 7-8 7h-6z" fill="#5059c9"/><path d="M23 27h22v16q0 11-11 11T23 43z" fill="#7b83eb"/><rect x="8" y="20" width="25" height="25" rx="2" fill="#464eb8"/><path d="M15 27h11M20.500 27v12" stroke="#fff" stroke-width="3"/></svg></a>
    <i class="rule"></i>
    <a href="#" class="mini" aria-label="Minimised terminal"><svg viewBox="0 0 78 72"><path d="M0 14h76v48H0z" fill="#202020"/><path d="M0 14h76v4H0z" fill="#3c3c40"/><path d="M0 18h2v44H0z" fill="#4a4a4e"/><path d="M4 21h5M4 24h9M4 27h6" stroke="#888"/><use href="#flower" x="48" y="48" width="28" height="28"/></svg></a>
    <a href="#" class="mini" aria-label="Minimised 1Password"><svg viewBox="0 0 78 72"><path d="M0 3h76v60H0z" fill="#242426"/><path d="M0 3h17v60H0z" fill="#48484e"/><path d="M0 13h17v3H0z" fill="#35589c"/><path d="M66 4h9v3h-9z" fill="#1f7ff0"/><path d="M20 15h2m-2 4h2m-2 4h2m-2 4h2m-2 4h2m-2 4h2m-2 4h2m-2 4h2m-2 4h2" stroke="#9ad" stroke-width="2"/><path d="M24 15h12M24 19h7M24 27h9M24 35h11M24 43h12M24 51h8M44 15h8" stroke="#999"/><use href="#onepw" x="50" y="46" width="25" height="25"/></svg></a>
    <a href="#" class="mini" aria-label="Trash"><svg viewBox="0 0 66 78"><path d="m7 10 7-9 12 3 8-4 9 2 10 7 4 8H7z" fill="#eee"/><path d="m20 8 8-2-4 9zM38 5l8 5-6 4z" fill="#3aaccd"/><path d="m43 4 6 6-6 4z" fill="#c05a33"/><path d="M4 8q4 9 29 9t29-9l-7 62q-1 7-22 7t-22-7z" fill="#7c8484" fill-opacity=".92"/><path d="M4 8q4 9 29 9t29-9M15 24l5 46M50 24l-4 46" stroke="#b4baba" stroke-width="1.500" fill="none"/></svg></a>
  </div>
</footer>
</body>
</html>
```
FILE: styles.css
```css
* { box-sizing: border-box; }
html { background: #000; }
body {
  margin: 0;
  min-height: 100vh;
  display: flex;
  flex-direction: column;
  overflow-x: hidden;
  font: 24px/32px "Noto Sans", sans-serif;
  color: #181f1f;
  background: #000;
}
a { color: inherit; text-decoration: none; }
button, input, select { font: inherit; color: inherit; }
button { cursor: pointer; }
h1, h2, p, ul { margin: 0; padding: 0; }
svg { display: block; flex: none; }
.sprite { position: absolute; width: 0; height: 0; }
.bare-btn { background: none; border: 0; padding: 0; }
.rule { flex: none; width: 2px; background: #6b6b75; }

/* macOS menu bar */
.menubar {
  display: flex;
  justify-content: space-between;
  align-items: center;
  height: 48px;
  padding: 0 36px 0 38px;
  background: linear-gradient(90deg, #4c1195, #3a0ca5 40%, #300a9f);
  color: #ece8f8;
  font: 500 25px/48px Inter, sans-serif;
  white-space: nowrap;
}
.menus, .status { display: flex; align-items: center; }
.menus { gap: 42px; }
.menus .strong { font-weight: 700; }
.apple { width: 28px; height: 32px; }
.status { gap: 34px; }
.status svg { width: 32px; height: 32px; }
.status .w36 { width: 36px; }
.status .w40 { width: 40px; height: 36px; }
.status .w44 { width: 44px; height: 36px; }
.status .w52 { width: 52px; }
.status time { font-size: 27px; font-weight: 400; }

/* browser chrome */
.browser {
  flex: 1;
  display: flex;
  flex-direction: column;
  margin-top: 2px;
  border-radius: 22px 22px 26px 26px;
  overflow: hidden;
  background: #fff;
}
.tabstrip {
  display: flex;
  align-items: flex-end;
  height: 76px;
  background: #0b0c14;
  border-top: 2px solid #55565c;
  border-radius: 22px 22px 0 0;
  font: 24px/32px Inter, sans-serif;
}
.lights { display: flex; gap: 16px; align-self: center; width: 178px; padding-left: 42px; }
.lights i { width: 24px; height: 24px; border-radius: 50%; }
.red { background: #ff5f57; }
.yellow { background: #febc2e; }
.green { background: #28c840; }
.tabs { display: flex; }
.tab {
  display: flex;
  align-items: center;
  gap: 16px;
  width: 190px;
  height: 60px;
  padding: 0 4px 0 14px;
  color: #c2c3c6;
  background: linear-gradient(#3c3c40, #3c3c40) right bottom / 2px 46px no-repeat;
}
.tab svg { width: 32px; height: 32px; }
.tab span {
  flex: 1;
  overflow: hidden;
  white-space: nowrap;
  mask-image: linear-gradient(90deg, #000 60%, transparent);
}
.tab.bare { padding-left: 16px; background: none; }
.tab.active { width: 192px; padding: 0 14px 0 16px; background: #323443; border-radius: 10px 10px 0 0; color: #fff; font-weight: 500; }
.tab .x { width: 20px; height: 20px; }
.tabstrip .bare-btn { height: 60px; padding-left: 30px; }
.tabstrip .bare-btn svg { width: 24px; height: 24px; }
.tabstrip .list { margin-left: auto; padding: 0 28px 0 0; }

.toolbar { display: flex; align-items: center; height: 72px; background: #323443; }
.nav { display: flex; align-items: center; gap: 32px; width: 530px; padding: 0 28px; }
.nav svg { width: 32px; height: 32px; }
.nav .mark { margin-left: auto; }
.urlbar {
  flex: 1;
  min-width: 0;
  display: flex;
  align-items: center;
  height: 56px;
  padding: 0 18px 0 27px;
  border-radius: 8px;
  background: #181a22;
}
.urlbar svg { width: 32px; height: 36px; }
.urlbar .lock { width: 18px; height: 24px; margin-right: 23px; }
.url { flex: 1; white-space: nowrap; font: 28px/36px Inter, sans-serif; color: #8b8c91; }
.url b { font-weight: 400; color: #fff; }
.urlbar .rule { height: 32px; margin: 0 21px; }
.urlbar .w36 { width: 36px; }
.urlbar .w36 + .w36 { margin-left: 32px; height: 32px; }
.extensions { display: flex; align-items: center; gap: 32px; width: 726px; padding-left: 178px; }
.extensions svg { width: 32px; height: 32px; }
.wallet { position: relative; width: 64px; padding-left: 16px; }
.wallet i { position: absolute; right: -4px; top: -8px; width: 24px; height: 24px; border-radius: 10px; background: #fb542b; }
.extensions .avatar { width: 44px; height: 44px; }
.extensions .menu { margin-left: -6px; }

.bookmarks {
  display: flex;
  align-items: center;
  gap: 32px;
  height: 66px;
  padding: 0 22px 10px 28px;
  background: #323443;
  color: #fff;
  font: 24px/32px Inter, sans-serif;
  white-space: nowrap;
}
.bookmarks a { display: flex; align-items: center; gap: 16px; }
.bookmarks svg { width: 32px; height: 32px; }
.bookmarks .other { margin-left: auto; padding-left: 20px; border-left: 2px solid #666874; }

/* application header */
.apphead {
  display: flex;
  align-items: center;
  height: 90px;
  padding: 0 40px 0 24px;
  border-bottom: 2px solid #e4e6e6;
}
.logo { width: 40px; height: 40px; margin-right: 22px; }
.apptitle { margin-right: 32px; }
h1 { font-size: 24px; line-height: 32px; font-weight: 600; }
.apptitle p { font-size: 20px; line-height: 26px; color: #4f5d60; }
.pagepick {
  display: flex;
  align-items: center;
  gap: 6px;
  height: 52px;
  padding: 4px 24px 0 20px;
  border: 0;
  border-radius: 26px;
  background: #dfe7fa;
  color: #032d42;
  font-weight: 500;
  white-space: nowrap;
}
.pagepick b { font-weight: 600; }
.caret { width: 16px; height: 12px; }
.switch { display: flex; align-items: center; height: 52px; margin-left: 25px; padding: 0 3px; border-radius: 26px; background: #dfe7fa; }
.switch button { height: 44px; padding: 0 15px; border: 0; border-radius: 22px; background: none; color: #032d42; font-weight: 500; line-height: 32px; }
.switch button:last-child { padding-left: 20px; }
.switch .on { padding: 0 24px; border: 3px solid #3b57e8; background: #fff; }
.pill {
  display: flex;
  align-items: center;
  gap: 8px;
  height: 52px;
  padding: 0 20px 0 19px;
  border: 2px solid #a9b3b3;
  border-radius: 26px;
  background: #fff;
  font-weight: 500;
}
.pill select { appearance: none; border: 0; background: none; padding: 0; outline: 0; }
.pill.small { height: 48px; padding: 0 12px 0 16px; }
.scope { margin-left: auto; }
.scope > svg:first-child { width: 20px; height: 24px; }
.help { margin-left: 39px; }
.help svg { width: 32px; height: 32px; }

.appbar { display: flex; align-items: center; height: 64px; padding-right: 24px; border-bottom: 2px solid #cfd5d5; }
.burger { display: flex; align-items: center; width: 64px; height: 62px; padding-left: 22px; border-right: 2px solid #cfd5d5; }
.burger svg { width: 18px; height: 12px; }
.warn { width: 22px; height: 20px; margin-left: 24px; }
.chips { display: flex; gap: 8px; margin-left: 26px; }
.chip { height: 48px; padding: 0 15px; border: 2px solid #a9b3b3; border-radius: 24px; background: #f6f8f7; color: #4f5d60; font-style: italic; }
.width { flex: 1; display: flex; align-items: center; justify-content: center; gap: 16px; padding-right: 12px; }
.fit { display: flex; align-items: center; gap: 8px; }
.fit input { appearance: none; width: 24px; height: 24px; margin: 0; border-radius: 6px; background: #3b57e8; display: grid; place-items: center; }
.fit input::after { content: ""; width: 7px; height: 12px; border: solid #fff; border-width: 0 2px 2px 0; rotate: 40deg; }
.acts { display: flex; gap: 24px; }
.open { border-color: #e8eaea; color: #c5caca; gap: 6px; }
.pill.open { padding: 0 16px; }
.open svg { width: 22px; height: 22px; }
.save { height: 48px; padding: 0 16px; border: 0; border-radius: 24px; background: #3b57e8; color: #fff; font-weight: 600; }

/* workspace */
.workspace { flex: 1; display: flex; min-height: 0; }
.rail { display: flex; flex-direction: column; align-items: center; gap: 24px; width: 64px; padding: 16px 0 16px 2px; border-right: 2px solid #cfd5d5; }
.rail button { display: grid; place-items: center; width: 48px; height: 48px; padding: 0; border: 0; border-radius: 50%; background: none; }
.rail .on { background: #e3e5e6; }
.rail svg { width: 22px; height: 22px; }
.rail .big { width: 24px; height: 24px; }
.push { flex: 1; }
.content { width: 638px; padding: 24px 24px; }
.panelhead { display: flex; align-items: center; justify-content: space-between; height: 32px; }
.panelhead h2 { font-size: 24px; line-height: 32px; font-weight: 600; }
.panelhead svg { width: 16px; height: 20px; margin-right: 16px; }
.search { display: flex; align-items: center; gap: 17px; height: 48px; padding: 0 15px; border: 2px solid #bcc4c4; border-radius: 8px; }
.search svg { width: 24px; height: 24px; }
.search input { flex: 1; min-width: 0; height: 40px; padding: 0; border: 0; outline: 0; background: none; font-size: 32px; line-height: 40px; }
.search input::placeholder { color: #4f5d60; opacity: 1; }
.content .search { margin-top: 24px; }
.tree { list-style: none; margin: 15px 0 0 -14px; }
.tree li { display: flex; align-items: center; gap: 11px; height: 48px; }
.tree svg { width: 22px; height: 22px; }
.tree .arrow { width: 20px; height: 16px; margin-right: -5px; }
.add { display: flex; align-items: center; gap: 12px; height: 48px; margin-left: 46px; color: #3b57e8; }
.add svg { width: 18px; height: 18px; }

.canvas {
  position: relative;
  flex: 1;
  padding: 45px 48px 6px 50px;
  background: radial-gradient(circle, #bdc3c3 2px, transparent 3px) 14px 4px / 36px 36px #d0d6d6;
}
.stage { height: 100%; padding: 4px 5px; background: linear-gradient(#d3d5da 35px, #fff 35px); }
.slot { display: flex; justify-content: center; height: 27px; border-radius: 8px; background: #f3f3f6; }
.slot svg { width: 24px; height: 24px; }
.dialog {
  position: absolute;
  inset: 62px 68px 64px 26px;
  border: 2px solid #8a9798;
  border-radius: 8px;
  background: #fff;
  box-shadow: 0 8px 24px rgba(24, 31, 31, .25);
}
.dialog::before {
  content: "";
  position: absolute;
  left: -14px;
  top: calc(50% - 12px);
  width: 24px;
  height: 24px;
  border: solid #8a9798;
  border-width: 0 0 2px 2px;
  background: #fff;
  rotate: 45deg;
}
.dialoghead { display: flex; align-items: center; justify-content: space-between; height: 72px; padding: 0 32px 0 16px; border-bottom: 2px solid #cfd5d5; }
.dialoghead h2 { padding-top: 2px; font-size: 30px; line-height: 40px; }
.dialoghead svg { width: 16px; height: 16px; margin-top: -8px; }
.dialog .search { margin: 32px 16px 0; }
.search.focus { padding: 0 12px; border: 4px solid #3b57e8; }
.cards { display: grid; grid-template-columns: repeat(auto-fill, 180px); gap: 24px; padding: 64px 17px; }
.card {
  position: relative;
  display: flex;
  flex-direction: column;
  align-items: center;
  justify-content: center;
  gap: 6px;
  height: 192px;
  padding: 0 8px;
  border: 4px solid transparent;
  border-radius: 16px;
  background: none;
  line-height: 30px;
}
.card > svg { width: 80px; height: 80px; }
.card.on { border-color: #3b57e8; padding: 0 32px; }
.tooltip {
  position: absolute;
  left: -15px;
  bottom: 204px;
  padding: 12px 16px;
  border-radius: 6px;
  background: #101414;
  color: #fff;
  white-space: nowrap;
}
.card .cursor { position: absolute; left: 84px; top: 93px; width: 28px; height: 28px; }

.config { width: 640px; padding-top: 28px; }
.config .panelhead { padding: 0 24px; }
.cfgtabs { display: grid; grid-template-columns: repeat(3, 1fr); margin-top: 26px; border-bottom: 4px solid #b9c3c2; }
.cfgtabs button { display: flex; align-items: center; justify-content: center; gap: 6px; height: 46px; padding: 0 0 2px; border: 0; background: none; color: #d9dddd; }
.cfgtabs svg { width: 22px; height: 22px; }
.cfgtabs .on { color: #ced6fb; box-shadow: 0 4px #a9b4e4; }
.empty { display: flex; flex-direction: column; align-items: center; gap: 24px; padding-top: 283px; text-align: center; line-height: 30px; }
.disc { display: grid; place-items: center; width: 96px; height: 96px; border-radius: 50%; background: #e3e5e6; }
.disc svg { width: 40px; height: 40px; }

/* dock */
.desk {
  position: relative;
  display: flex;
  justify-content: center;
  height: 116px;
  padding-top: 2px;
  background:
    linear-gradient(90deg, #0d0224 40%, #14003a 64%, #42066a 66%, #2e0560 80%, #150238) bottom / 100% 10px no-repeat,
    linear-gradient(#000 30%, #0f0228);
}
.dock {
  position: relative;
  display: flex;
  align-items: flex-start;
  gap: 20px;
  height: 104px;
  padding: 14px;
  border: 2px solid #45414d;
  border-radius: 40px;
  background: linear-gradient(90deg, #1e1a28, #231b28 40%, #2c1d30 60%, #201a27);
  box-shadow: 0 -10px 90px rgba(0, 0, 0, .3);
}
.dockback {
  position: absolute;
  left: 50%;
  top: 0;
  width: 1300px;
  height: 88px;
  border: 2px solid #37353d;
  border-top: 0;
  border-radius: 0 0 28px 28px;
  background: linear-gradient(#000, #1c191f);
}
.dock a { position: relative; width: 66px; height: 66px; }
.dock a > svg { width: 66px; height: 66px; }
.dock .spill { overflow: visible; }
.dock .over { width: 76px; height: 76px; margin: -5px; }
.dock .mini > svg { width: 78px; height: 72px; margin-left: -6px; overflow: visible; }
.dock .run::after { content: ""; position: absolute; left: 29px; top: 75px; width: 8px; height: 8px; border-radius: 50%; background: #a39dac; }
.dock em { position: absolute; right: -8px; top: -8px; width: 30px; height: 30px; border-radius: 50%; background: #f5413a; color: #fff; font: 16px/30px Inter, sans-serif; text-align: center; }
.dock .rule { height: 76px; margin: 0 9px; }
```
